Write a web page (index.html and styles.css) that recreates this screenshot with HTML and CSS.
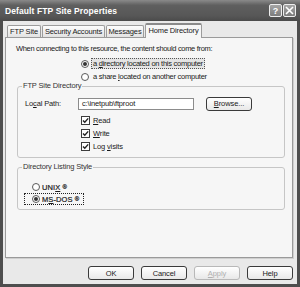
FILE: index.html
```html
<!DOCTYPE html>
<html lang="en">
<head>
  <meta charset="UTF-8" />
  <title>Default FTP Site Properties</title>
  <link rel="stylesheet" href="styles.css">
</head>
<body>
  <div class="window">
    <div class="titlebar">
      <span class="title">Default FTP Site Properties</span>
      <span class="caption-btns">
        <span class="cbtn">?</span>
        <span class="cbtn">
          <svg width="9" height="9" viewBox="0 0 9 9"><path d="M1 1L8 8M8 1L1 8" stroke="#fff" stroke-width="1.6" fill="none"/></svg>
        </span>
      </span>
    </div>

    <div class="client">
      <div class="tabs">
        <span class="tab t1">FTP Site</span>
        <span class="tab t2">Security Accounts</span>
        <span class="tab t3">Messages</span>
        <span class="tab t4 active">Home Directory</span>
      </div>

      <div class="panel">
        <p class="intro">When connecting to this resource, the content should come from:</p>
        <div class="sources">
          <div class="src-row"><span class="radio on"></span><span class="focus">a <u>d</u>irectory located on this computer</span></div>
          <div class="src-row"><span class="radio"></span><span class="plain">a share <u>l</u>ocated on another computer</span></div>
        </div>

        <div class="group g1">
          <span class="group-title">FTP Site Directory</span>
          <div class="path-row">
            <span class="path-label">Lo<u>c</u>al Path:</span>
            <span class="field">c:\inetpub\ftproot</span>
            <span class="btn browse"><u>B</u>rowse...</span>
          </div>
          <div class="checks">
            <div class="chk-row"><span class="chk"><svg width="7" height="7" viewBox="0 0 7 7"><path d="M1 3.4L2.8 5.3L6.2 1.4" stroke="#222" stroke-width="1.4" fill="none"/></svg></span><span><u>R</u>ead</span></div>
            <div class="chk-row"><span class="chk"><svg width="7" height="7" viewBox="0 0 7 7"><path d="M1 3.4L2.8 5.3L6.2 1.4" stroke="#222" stroke-width="1.4" fill="none"/></svg></span><span><u>W</u>rite</span></div>
            <div class="chk-row"><span class="chk"><svg width="7" height="7" viewBox="0 0 7 7"><path d="M1 3.4L2.8 5.3L6.2 1.4" stroke="#222" stroke-width="1.4" fill="none"/></svg></span><span>Log <u>v</u>isits</span></div>
          </div>
        </div>

        <div class="group g2">
          <span class="group-title">Directory Listing Style</span>
          <div class="style-rows">
            <div class="style-row"><span class="radio"></span><span>UNI<u>X</u> <sup>®</sup></span></div>
            <div class="style-row focused"><span class="radio on"></span><span>M<u>S</u>-DOS <sup>®</sup></span></div>
          </div>
        </div>
      </div>

      <div class="actions">
        <span class="btn">OK</span>
        <span class="btn">Cancel</span>
        <span class="btn disabled"><u>A</u>pply</span>
        <span class="btn">Help</span>
      </div>
    </div>
  </div>
</body>
</html>
```

FILE: styles.css
```css
body { margin: 0; background: #fff; font-family: "Liberation Sans", Arial, sans-serif; font-size: 7.5px; color: #1a1a1a; }
u { text-decoration: underline; text-underline-offset: 1px; }

.window { width: 300px; height: 287px; background: #4e4e4e; display: flex; flex-direction: column; }

.titlebar { height: 21px; flex: none; display: flex; align-items: center; justify-content: space-between; padding: 0 4px 0 5px; box-sizing: border-box; background: linear-gradient(#8a8a8a, #5f5f5f 25%, #575757 75%, #4a4a4a); }
.title { color: #fff; font-weight: bold; font-size: 8.5px; letter-spacing: 0.1px; }
.caption-btns { display: flex; gap: 1px; }
.cbtn { width: 13px; height: 13px; box-sizing: border-box; border: 1px solid #eee; border-radius: 2px; background: linear-gradient(#a5a5a5, #7c7c7c); color: #fff; font-weight: bold; font-size: 9px; display: flex; align-items: center; justify-content: center; }

.client { flex: 1; margin: 0 3px 3px; background: #e9e9e9; padding-top: 2px; display: flex; flex-direction: column; }

.tabs { display: flex; align-items: flex-end; gap: 1px; height: 14px; margin-left: 4px; position: relative; z-index: 1; }
.tab { box-sizing: border-box; height: 12px; border: 1px solid #9c9c9c; border-bottom: none; border-radius: 2px 2px 0 0; background: linear-gradient(#fdfdfd, #e2e2e2); display: flex; align-items: center; justify-content: center; white-space: nowrap; letter-spacing: -0.15px; }
.t1 { width: 34px; }
.t2 { width: 63px; }
.t3 { width: 38px; }
.t4 { width: 57px; }
.tab.active { height: 15px; margin-bottom: -1px; background: #f6f6f6; border-top: 2px solid #8a8a8a; padding-bottom: 2px; }

.panel { height: 221px; box-sizing: border-box; margin: 0 4px 0 2px; border: 1px solid #9a9a9a; background: #f6f6f6; box-shadow: 1px 1px 0 #cfcfcf; }

.intro { margin: 6px 0 0 10px; line-height: 10px; letter-spacing: -0.32px; }

.sources { margin-top: 3px; padding-left: 75px; }
.src-row { height: 13px; display: flex; align-items: center; gap: 2px; letter-spacing: -0.25px; }
.focus { border: 1px dotted #555; background: #e4e4e4; padding: 0 1px; line-height: 9px; }
.plain { padding: 0 2px; }

.radio { width: 8px; height: 8px; box-sizing: border-box; border: 1px solid #5a5a5a; border-radius: 50%; background: #fff; display: inline-flex; align-items: center; justify-content: center; flex: none; }
.radio.on::after { content: ""; width: 4px; height: 4px; border-radius: 50%; background: #333; }

.group { margin: 0 7px 0 11px; border: 1px solid #c6c6c6; border-radius: 3px; }
.group-title { display: inline-block; margin: -6px 0 0 4px; padding: 0 1px; line-height: 10px; background: #f6f6f6; vertical-align: top; letter-spacing: -0.15px; color: #333; }
.g1 { margin-top: 3px; padding-bottom: 4px; }
.g2 { margin-top: 9px; padding-bottom: 4px; }

.path-row { margin-top: 1px; height: 13px; display: flex; align-items: center; padding-left: 7px; }
.path-label { width: 53px; letter-spacing: -0.15px; }
.field { width: 116px; height: 12px; box-sizing: border-box; border: 1px solid #8c8c8c; background: #fff; padding-left: 3px; display: flex; align-items: center; letter-spacing: -0.15px; }
.browse { margin-left: 12px; width: 56px; }

.checks { margin-top: 4px; padding-left: 63px; }
.chk-row { height: 13px; display: flex; align-items: center; gap: 3px; letter-spacing: -0.15px; }
.chk { width: 9px; height: 9px; box-sizing: border-box; border: 1px solid #3c3c3c; background: #fff; display: flex; align-items: center; justify-content: center; }

.style-rows { margin-top: 4px; padding-left: 6px; }
.style-row { width: fit-content; height: 12px; box-sizing: border-box; display: flex; align-items: center; gap: 2px; padding: 0 4px 0 7px; border: 1px solid transparent; letter-spacing: 0.1px; -webkit-text-stroke: 0.2px #1a1a1a; }
.style-row.focused { border: 1px dotted #222; }
.style-row sup { font-size: 6px; vertical-align: 1px; }

.actions { margin-top: 8px; display: flex; justify-content: flex-end; gap: 7px; padding-right: 4px; }
.btn { width: 46px; height: 14px; box-sizing: border-box; border: 1px solid #3a3a3a; border-radius: 3px; background: linear-gradient(#ffffff, #e8e8e8); display: flex; align-items: center; justify-content: center; letter-spacing: -0.1px; }
.btn.disabled { border-color: #b8b8b8; color: #b0b0b0; }
```
